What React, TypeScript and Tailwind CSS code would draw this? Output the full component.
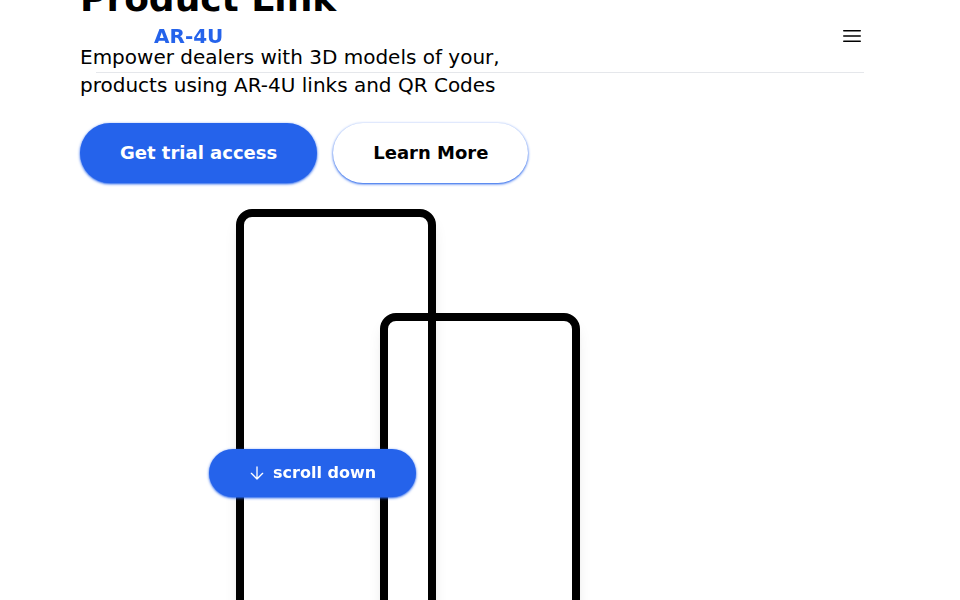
function Navbar() {
  return (
    <header className="fixed inset-x-0 top-0 z-20">
      <nav className="mx-[10%] flex h-[73px] items-center justify-between border-b border-gray-200 pl-[58px]">
        <a href="#" className="text-xl font-bold text-[#2563eb]">
          AR-4U
        </a>
        <button type="button" aria-label="Open menu" className="text-black">
          <svg viewBox="0 0 24 24" className="h-6 w-6" fill="none" stroke="currentColor" strokeWidth="1.5">
            <path strokeLinecap="round" d="M3.75 6.75h16.5M3.75 12h16.5M3.75 17.25h16.5" />
          </svg>
        </button>
      </nav>
    </header>
  )
}

function PhoneFrame({ className }: { className: string }) {
  return <div className={`h-[420px] w-[200px] shrink-0 rounded-2xl border-8 border-black shadow-lg ${className}`} />
}

export default function App() {
  return (
    <div className="relative h-screen overflow-hidden bg-white font-['DejaVu_Sans',sans-serif] text-black">
      <Navbar />

      {/* Hero */}
      <main className="-mt-[21px] px-20">
        <h1 className="text-4xl font-bold">Product Link</h1>
        <p className="mt-6 max-w-md text-xl">
          Empower dealers with 3D models of your, products using AR-4U links and QR Codes
        </p>
        <div className="mt-6 flex gap-4">
          <button
            type="button"
            className="rounded-full bg-[#2563eb] px-10 py-4 text-lg font-semibold text-white shadow-[0_1px_3px_#2563eb,0_1px_2px_-1px_#2563eb]"
          >
            Get trial access
          </button>
          <button
            type="button"
            className="rounded-full bg-white px-10 py-4 text-lg font-semibold shadow-[0_1px_3px_#2563eb,0_1px_2px_-1px_#2563eb]"
          >
            Learn More
          </button>
        </div>

        {/* Phones */}
        <div className="mt-[26px] flex items-start pl-[156px]">
          <PhoneFrame className="" />
          <PhoneFrame className="mt-[104px] -ml-14" />
        </div>
      </main>

      <button
        type="button"
        className="fixed bottom-[103px] left-[209px] z-10 flex items-center gap-2 rounded-full bg-[#2563eb] px-10 py-3 font-semibold text-white shadow-[0_1px_3px_#2563eb,0_1px_2px_-1px_#2563eb]"
      >
        <svg viewBox="0 0 24 24" className="h-4 w-4" fill="none" stroke="currentColor" strokeWidth="2">
          <path strokeLinecap="round" strokeLinejoin="round" d="M20.5 12.5 12 21l-8.5-8.5M12 21V3" />
        </svg>
        scroll down
      </button>
    </div>
  )
}
